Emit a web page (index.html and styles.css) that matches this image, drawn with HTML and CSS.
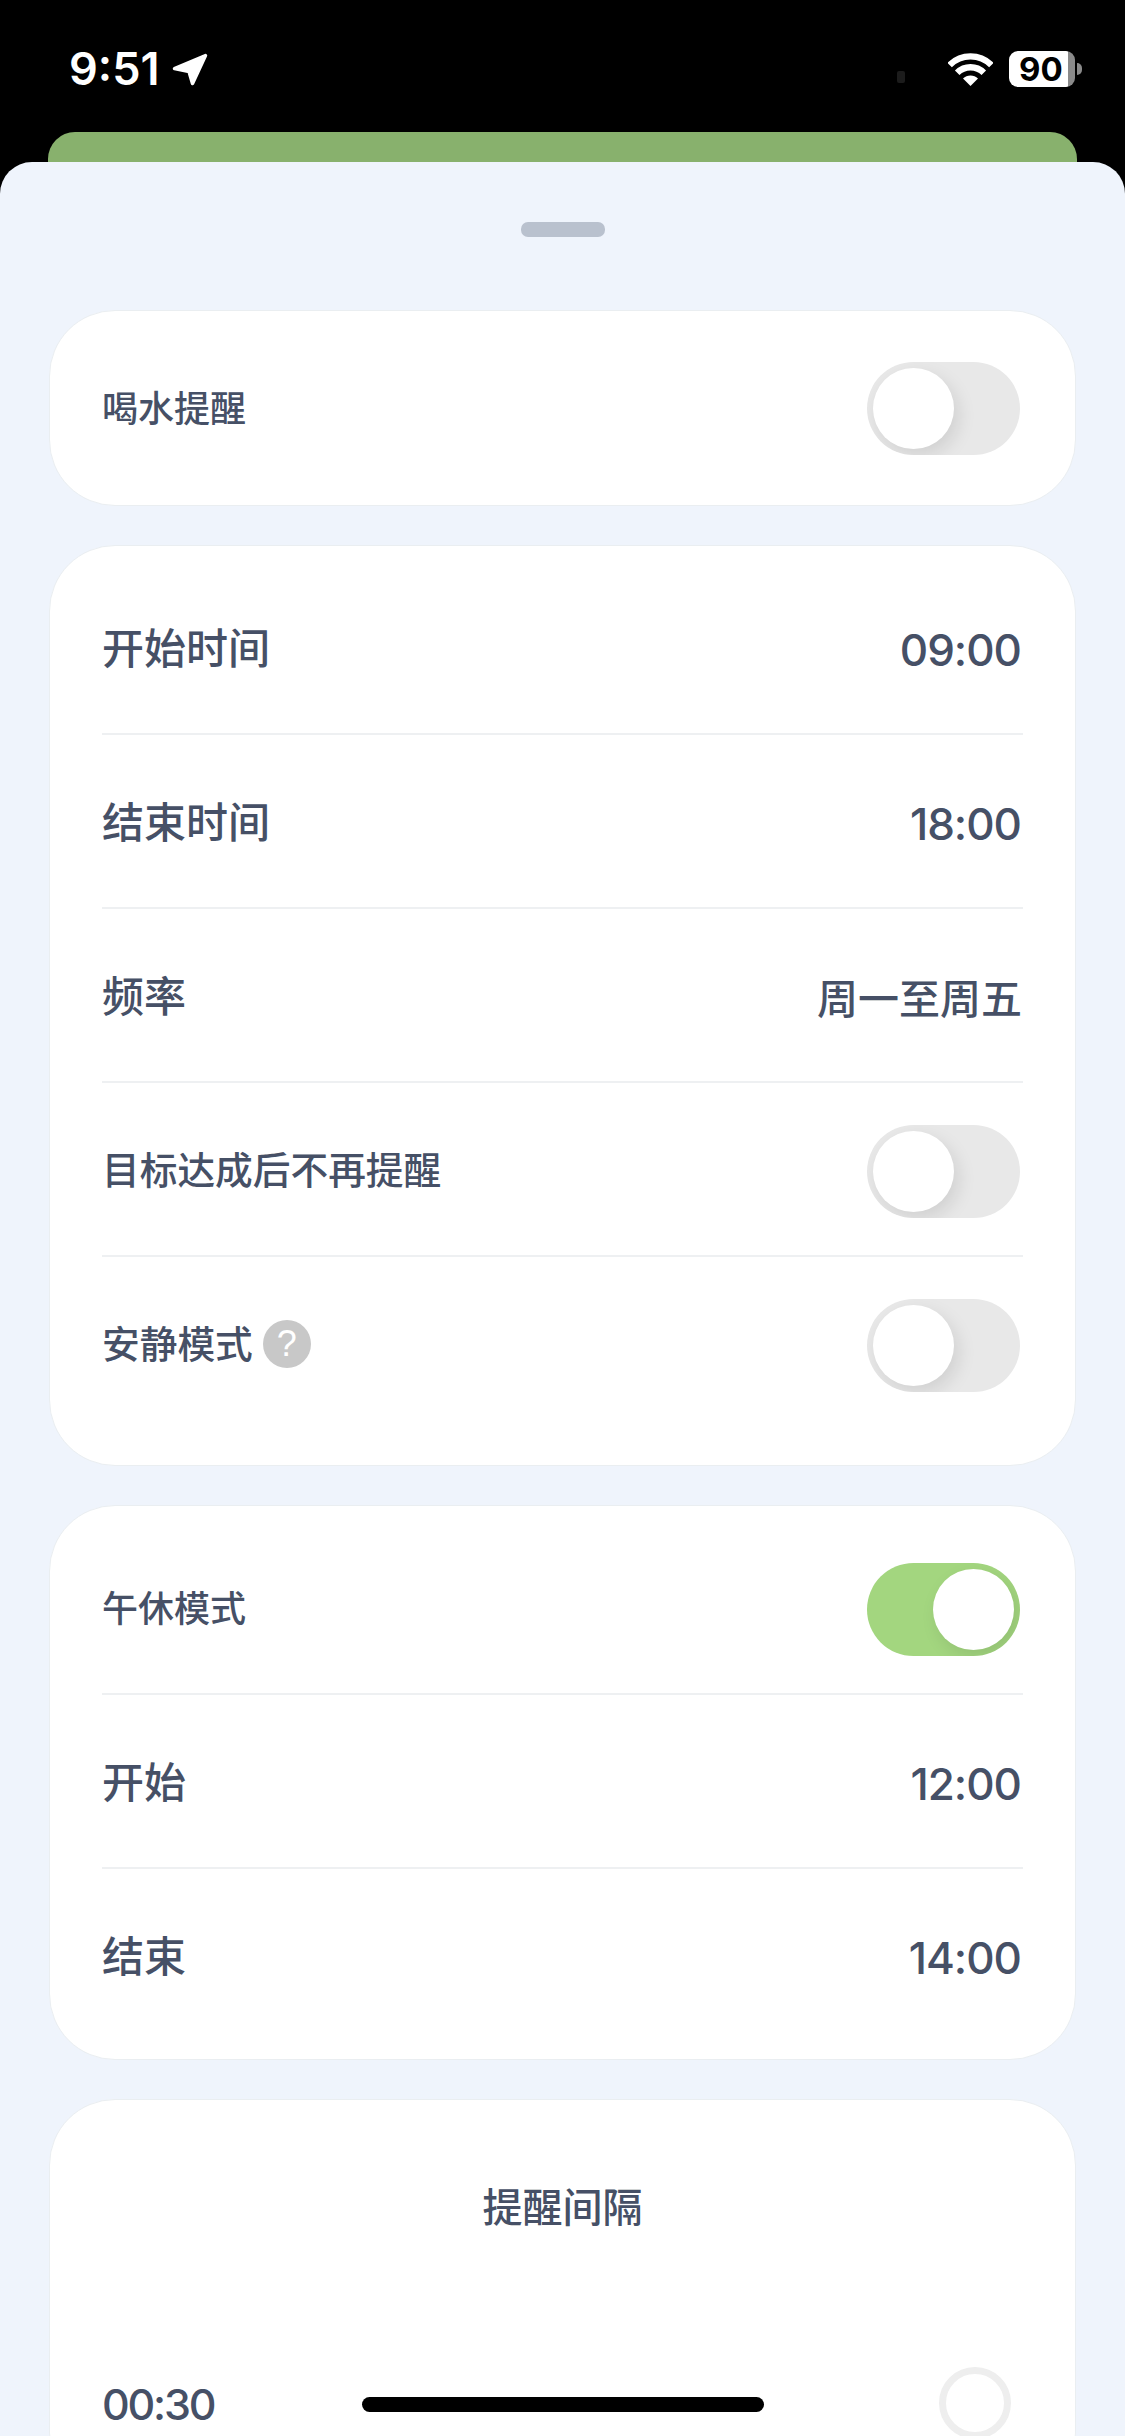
FILE: index.html
```html
<!DOCTYPE html>
<html lang="zh-CN">
<head>
<meta charset="utf-8">
<title>喝水提醒</title>
<link rel="stylesheet" href="styles.css">
</head>
<body>
<div class="phone">
  <header class="status">
    <div class="status-left">
      <span class="time">9:51</span>
      <svg class="arrow" viewBox="0 0 36 33"><path d="M33.5 2.5 L2.5 15.5 L17 18.5 L20.5 30.5 Z"/></svg>
    </div>
    <div class="status-right">
      <span class="speck"></span>
      <svg class="wifi" viewBox="0 0 45 33">
        <path class="band" d="M1.6 12.1 A29.5 29.5 0 0 1 43.4 12.1"/>
        <path class="band" d="M9.2 19.7 A18.8 18.8 0 0 1 35.8 19.7"/>
        <path class="wedge" d="M22.5 33 L15 25.5 A10.6 10.6 0 0 1 30 25.5 Z"/>
      </svg>
      <div class="battery"><span class="level">90</span></div>
      <span class="tip"></span>
    </div>
  </header>
  <div class="peek"></div>
  <main class="sheet">
    <div class="handle"></div>

    <section class="card card-single">
      <div class="row row-single">
        <span class="label small">喝水提醒</span>
        <span class="toggle"><span class="knob"></span></span>
      </div>
    </section>

    <section class="card card-schedule">
      <div class="row"><span class="label">开始时间</span><span class="value">09:00</span></div>
      <div class="row"><span class="label">结束时间</span><span class="value">18:00</span></div>
      <div class="row"><span class="label">频率</span><span class="value value-text">周一至周五</span></div>
      <div class="row">
        <span class="label mid">目标达成后不再提醒</span>
        <span class="toggle"><span class="knob"></span></span>
      </div>
      <div class="row row-last">
        <span class="label mid">安静模式<span class="help">?</span></span>
        <span class="toggle"><span class="knob"></span></span>
      </div>
    </section>

    <section class="card card-nap">
      <div class="row">
        <span class="label small">午休模式</span>
        <span class="toggle on"><span class="knob"></span></span>
      </div>
      <div class="row"><span class="label">开始</span><span class="value">12:00</span></div>
      <div class="row row-last"><span class="label">结束</span><span class="value">14:00</span></div>
    </section>

    <section class="card card-interval">
      <h2 class="title">提醒间隔</h2>
      <div class="interval-row">
        <span class="interval-time">00:30</span>
        <span class="radio"></span>
      </div>
    </section>
  </main>
  <div class="home-bar"></div>
</div>
</body>
</html>
```

FILE: styles.css
```css
* { box-sizing: border-box; }
html, body { margin: 0; padding: 0; background: #000; }
.phone {
  position: relative;
  width: 1125px;
  height: 2436px;
  overflow: hidden;
  background: #000;
  font-family: Inter, "Noto Sans CJK SC", sans-serif;
  color: #465066;
}
.status {
  height: 132px;
  display: flex;
  justify-content: space-between;
  padding: 51px 43px 0 69px;
}
.status-left { display: flex; align-items: flex-start; gap: 13px; height: 36px; }
.time { color: #fff; font-size: 45px; font-weight: 600; line-height: 36px; }
.arrow { width: 36px; height: 33px; margin-top: 2px; }
.arrow path { fill: #fff; stroke: #fff; stroke-width: 3.5; stroke-linejoin: round; }
.status-right { display: flex; align-items: center; height: 36px; }
.speck { width: 8px; height: 12px; margin: 15px 43px 0 0; border-radius: 2px; background: #1c1c1c; }
.wifi { width: 45px; height: 33px; margin-right: 16px; }
.band { fill: none; stroke: #fff; stroke-width: 6.4; }
.wedge { fill: #fff; }
.battery {
  width: 66px;
  height: 36px;
  border-radius: 9px;
  background: linear-gradient(to right, #fff 90%, #8a8a8a 90%);
  display: flex;
  align-items: center;
  padding-left: 10px;
}
.level { color: #000; font-size: 33px; font-weight: 700; line-height: 36px; font-family: Inter, sans-serif; }
.tip { width: 5px; height: 12px; margin-left: 2px; border-radius: 0 6px 6px 0; background: #8a8a8a; }

.peek {
  height: 30px;
  margin: 0 48px;
  background: #88b16d;
  border-radius: 27px 27px 0 0;
}
.sheet {
  height: 2274px;
  overflow: hidden;
  background: #eff4fc;
  border-radius: 32px 32px 0 0;
  padding: 60px 49px 0;
  display: flex;
  flex-direction: column;
  gap: 39px;
}
.handle {
  width: 84px;
  height: 15px;
  margin: 0 auto 34px;
  border-radius: 7px;
  background: #b9c1ce;
  flex: none;
}
.card {
  flex: none;
  background: #fff;
  border: 1px solid #eaeef1;
  border-radius: 66px;
  padding: 0 52px;
}
.card-single { height: 196px; }
.card-schedule { height: 921px; padding-top: 15px; }
.card-nap { height: 555px; padding-top: 15px; }
.card-interval { height: 400px; padding-top: 0; }
.row {
  height: 174px;
  display: flex;
  align-items: center;
  justify-content: space-between;
  border-bottom: 2px solid #eef0f2;
  padding-top: 4px;
}
.row-single { height: 191px; border-bottom: 0; }
.row-last { border-bottom-color: transparent; }
.label {
  font-family: "Noto Sans CJK SC", sans-serif;
  font-size: 42px;
  font-weight: 500;
  line-height: 56px;
  display: flex;
  align-items: center;
  padding-bottom: 6px;
}
.label.small { font-size: 36px; }
.label.mid { font-size: 37.7px; }
.value { font-size: 44px; font-weight: 500; letter-spacing: -1px; line-height: 56px; padding: 1px 2px 0 0; }
.value-text { font-family: "Noto Sans CJK SC", sans-serif; font-size: 41px; letter-spacing: 0; padding: 0 1px 3px 0; }
.help {
  width: 48px;
  height: 48px;
  margin: 3px 0 0 10px;
  border-radius: 50%;
  background: #c8c8c8;
  color: #fff;
  font-family: "Liberation Sans", sans-serif;
  font-size: 36px;
  font-weight: 400;
  line-height: 48px;
  text-align: center;
}
.toggle {
  display: block;
  width: 153px;
  height: 93px;
  padding: 6px;
  margin-right: 3px;
  border-radius: 47px;
  background: #e8e8e8;
  overflow: hidden;
  flex: none;
}
.toggle.on { background: #a3d67f; display: flex; justify-content: flex-end; }
.knob {
  display: block;
  width: 81px;
  height: 81px;
  border-radius: 50%;
  background: #fff;
  box-shadow: 5px 7px 18px rgba(0, 0, 0, 0.1);
}
.title {
  margin: 0;
  padding-top: 77px;
  font-family: "Noto Sans CJK SC", sans-serif;
  font-size: 40px;
  font-weight: 500;
  line-height: 56px;
  text-align: center;
}
.interval-row {
  display: flex;
  justify-content: space-between;
  align-items: flex-start;
  margin-top: 134px;
  padding-right: 12px;
}
.interval-time { margin-top: 9px; font-size: 43px; font-weight: 500; letter-spacing: -2.2px; line-height: 56px; }
.radio {
  width: 72px;
  height: 72px;
  border-radius: 50%;
  border: 7px solid #eeeeee;
  background: #fff;
}
.home-bar {
  position: absolute;
  left: 362px;
  top: 2397px;
  width: 402px;
  height: 15px;
  border-radius: 8px;
  background: #000;
}
```
